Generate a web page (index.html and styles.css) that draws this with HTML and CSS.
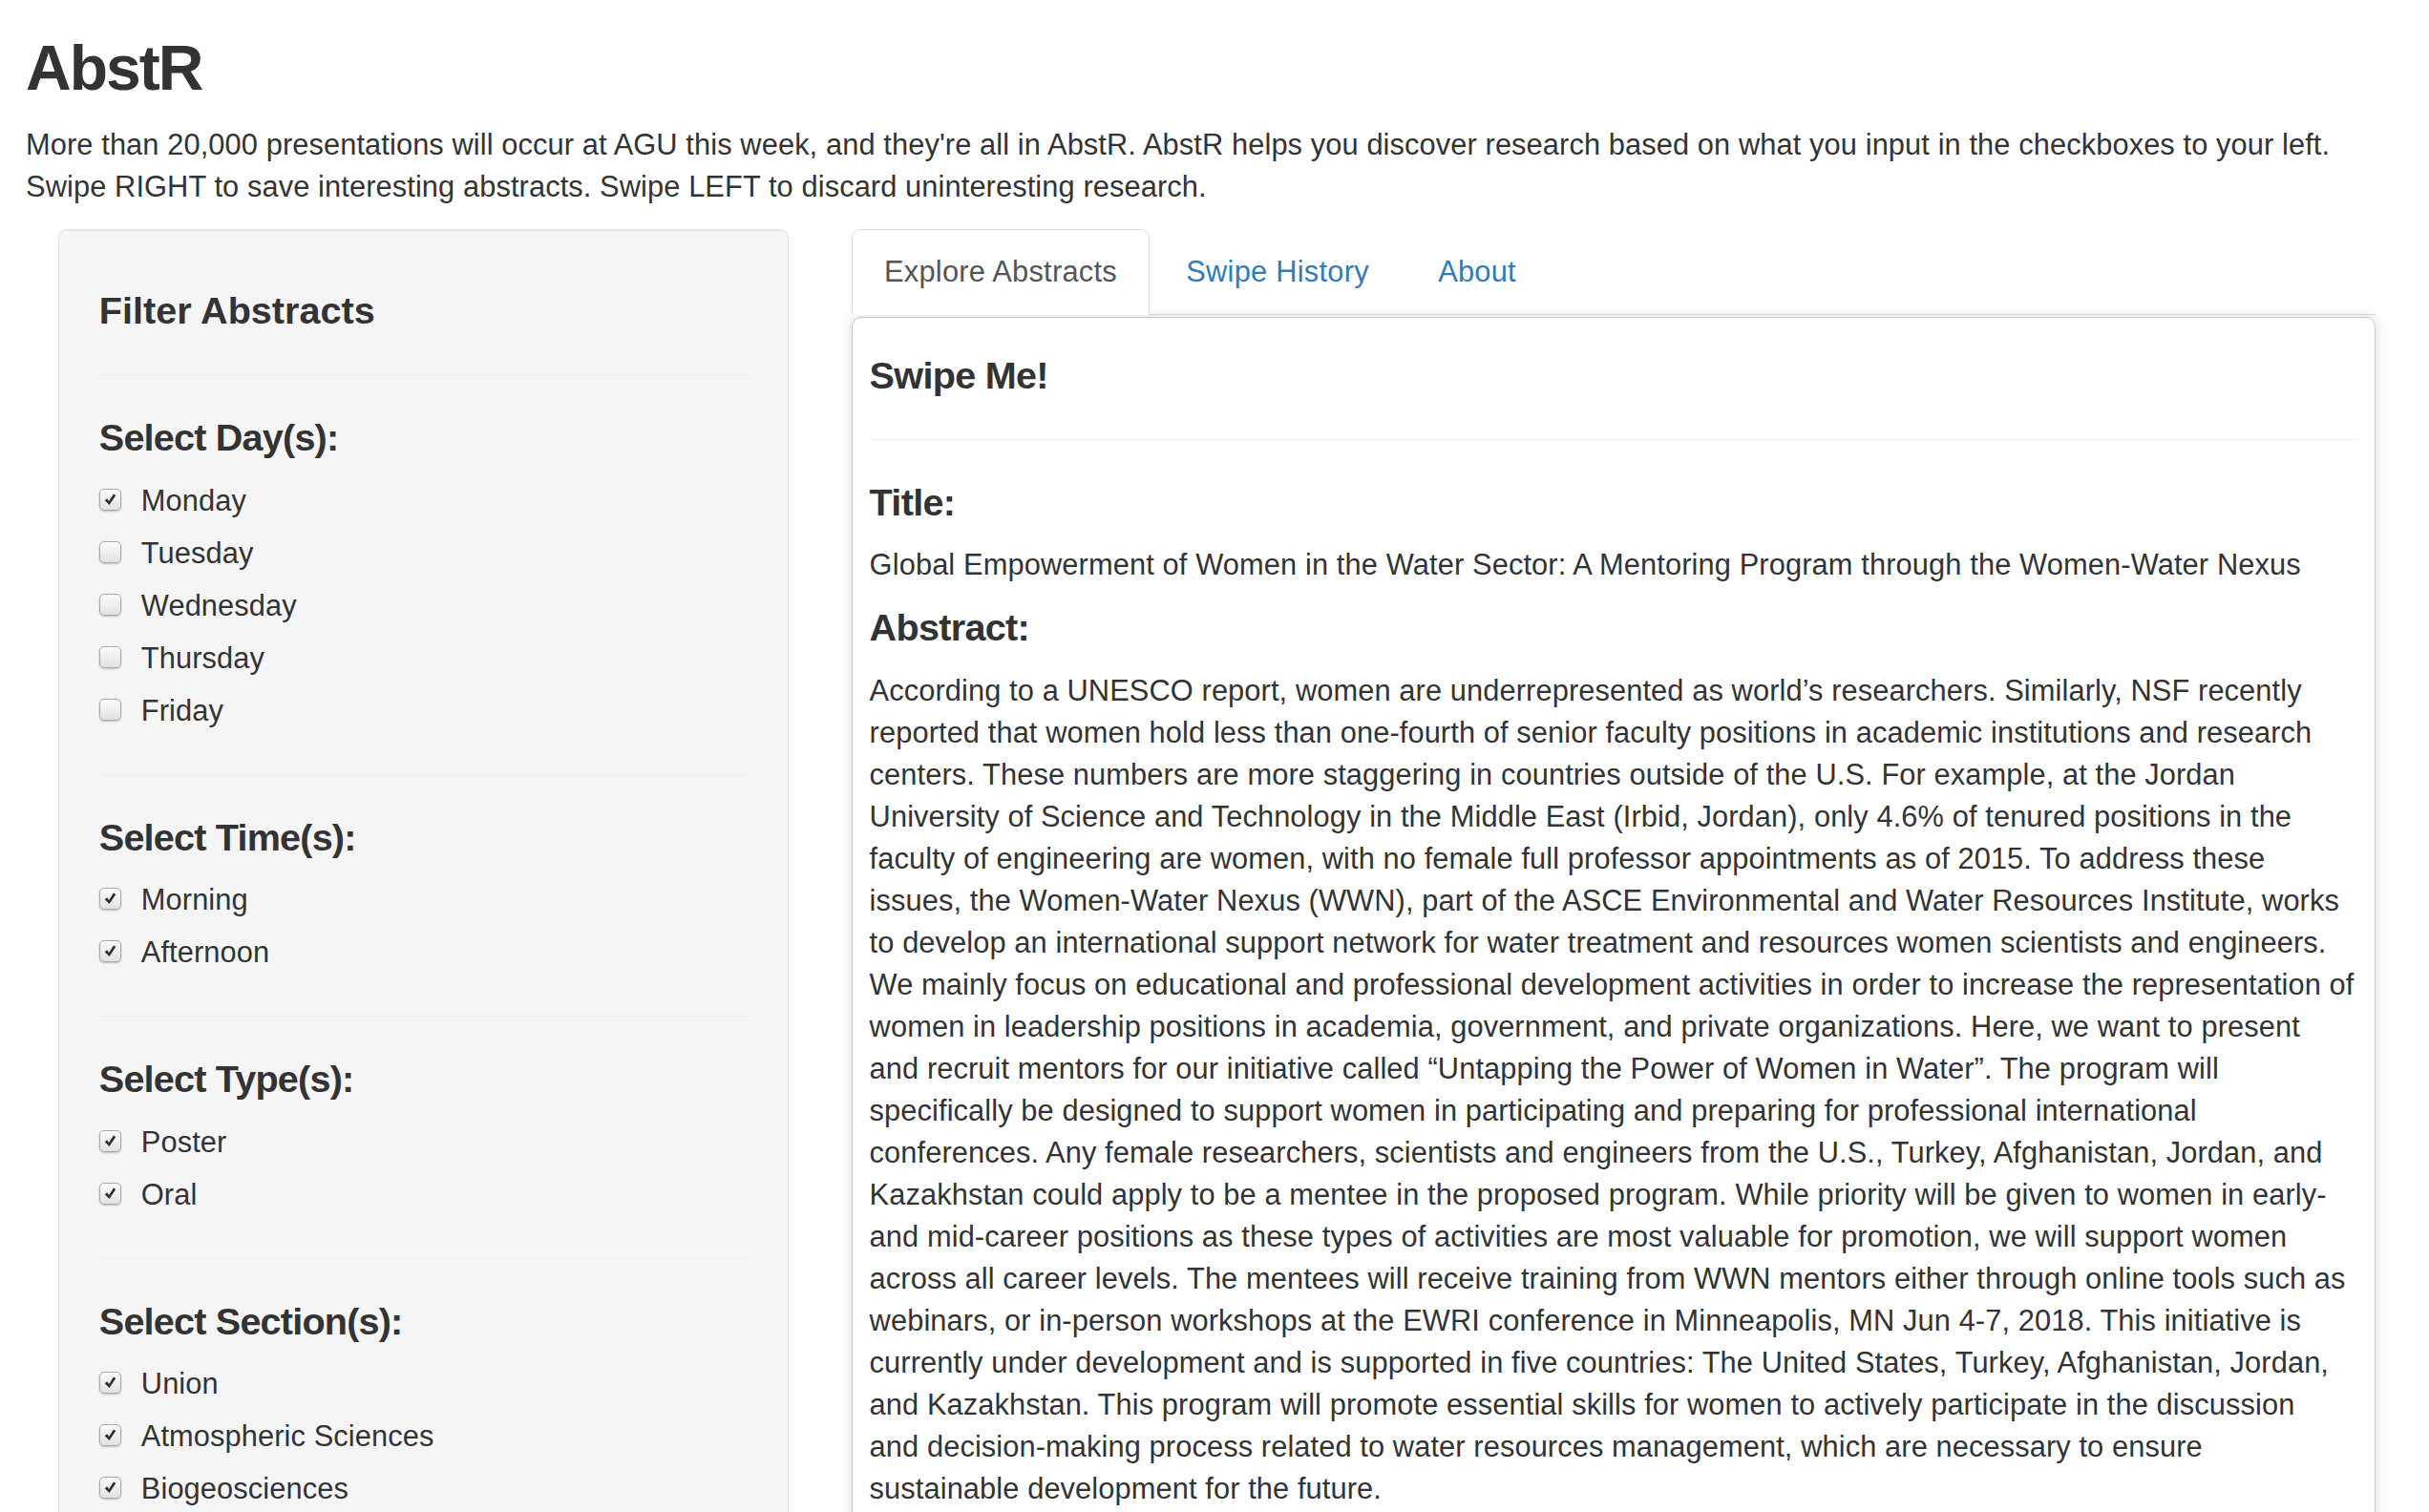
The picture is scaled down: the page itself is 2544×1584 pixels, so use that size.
FILE: index.html
```html
<!DOCTYPE html>
<html lang="en">
<head>
<meta charset="utf-8">
<title>AbstR</title>
<link rel="stylesheet" href="styles.css">
</head>
<body>
<div class="page">
  <h2 class="app-title">AbstR</h2>
  <p class="intro">More than 20,000 presentations will occur at AGU this week, and they're all in AbstR. AbstR helps you discover research based on what you input in the checkboxes to your left.<br>Swipe RIGHT to save interesting abstracts. Swipe LEFT to discard uninteresting research.</p>

  <div class="layout">
    <aside class="well">
      <h4 class="filter-title">Filter Abstracts</h4>
      <hr>
      <div class="group">
        <h4 class="group-title">Select Day(s):</h4>
        <div class="opts">
          <label class="check"><span class="box on"><svg viewBox="0 0 23 23"><path d="M5.2 12.2 L7.8 10.2 L10 13.2 L15.2 4.8 L17.8 6.6 L10.4 17.6 Z"/></svg></span>Monday</label>
          <label class="check"><span class="box"></span>Tuesday</label>
          <label class="check"><span class="box"></span>Wednesday</label>
          <label class="check"><span class="box"></span>Thursday</label>
          <label class="check"><span class="box"></span>Friday</label>
        </div>
      </div>
      <hr>
      <div class="group">
        <h4 class="group-title">Select Time(s):</h4>
        <div class="opts">
          <label class="check"><span class="box on"><svg viewBox="0 0 23 23"><path d="M5.2 12.2 L7.8 10.2 L10 13.2 L15.2 4.8 L17.8 6.6 L10.4 17.6 Z"/></svg></span>Morning</label>
          <label class="check"><span class="box on"><svg viewBox="0 0 23 23"><path d="M5.2 12.2 L7.8 10.2 L10 13.2 L15.2 4.8 L17.8 6.6 L10.4 17.6 Z"/></svg></span>Afternoon</label>
        </div>
      </div>
      <hr>
      <div class="group">
        <h4 class="group-title">Select Type(s):</h4>
        <div class="opts">
          <label class="check"><span class="box on"><svg viewBox="0 0 23 23"><path d="M5.2 12.2 L7.8 10.2 L10 13.2 L15.2 4.8 L17.8 6.6 L10.4 17.6 Z"/></svg></span>Poster</label>
          <label class="check"><span class="box on"><svg viewBox="0 0 23 23"><path d="M5.2 12.2 L7.8 10.2 L10 13.2 L15.2 4.8 L17.8 6.6 L10.4 17.6 Z"/></svg></span>Oral</label>
        </div>
      </div>
      <hr>
      <div class="group">
        <h4 class="group-title">Select Section(s):</h4>
        <div class="opts">
          <label class="check"><span class="box on"><svg viewBox="0 0 23 23"><path d="M5.2 12.2 L7.8 10.2 L10 13.2 L15.2 4.8 L17.8 6.6 L10.4 17.6 Z"/></svg></span>Union</label>
          <label class="check"><span class="box on"><svg viewBox="0 0 23 23"><path d="M5.2 12.2 L7.8 10.2 L10 13.2 L15.2 4.8 L17.8 6.6 L10.4 17.6 Z"/></svg></span>Atmospheric Sciences</label>
          <label class="check"><span class="box on"><svg viewBox="0 0 23 23"><path d="M5.2 12.2 L7.8 10.2 L10 13.2 L15.2 4.8 L17.8 6.6 L10.4 17.6 Z"/></svg></span>Biogeosciences</label>
        </div>
      </div>
    </aside>

    <main class="main">
      <ul class="tabs">
        <li class="active"><a href="#">Explore Abstracts</a></li>
        <li><a href="#">Swipe History</a></li>
        <li><a href="#">About</a></li>
      </ul>
      <section class="card">
        <h4 class="card-title">Swipe Me!</h4>
        <hr>
        <h4 class="card-title">Title:</h4>
        <p class="abs-title">Global Empowerment of Women in the Water Sector: A Mentoring Program through the Women-Water Nexus</p>
        <h4 class="card-title">Abstract:</h4>
        <p class="abs-text">According to a UNESCO report, women are underrepresented as world’s researchers. Similarly, NSF recently<br>reported that women hold less than one-fourth of senior faculty positions in academic institutions and research<br>centers. These numbers are more staggering in countries outside of the U.S. For example, at the Jordan<br>University of Science and Technology in the Middle East (Irbid, Jordan), only 4.6% of tenured positions in the<br>faculty of engineering are women, with no female full professor appointments as of 2015. To address these<br>issues, the Women-Water Nexus (WWN), part of the ASCE Environmental and Water Resources Institute, works<br>to develop an international support network for water treatment and resources women scientists and engineers.<br>We mainly focus on educational and professional development activities in order to increase the representation of<br>women in leadership positions in academia, government, and private organizations. Here, we want to present<br>and recruit mentors for our initiative called “Untapping the Power of Women in Water”. The program will<br>specifically be designed to support women in participating and preparing for professional international<br>conferences. Any female researchers, scientists and engineers from the U.S., Turkey, Afghanistan, Jordan, and<br>Kazakhstan could apply to be a mentee in the proposed program. While priority will be given to women in early-<br>and mid-career positions as these types of activities are most valuable for promotion, we will support women<br>across all career levels. The mentees will receive training from WWN mentors either through online tools such as<br>webinars, or in-person workshops at the EWRI conference in Minneapolis, MN Jun 4-7, 2018. This initiative is<br>currently under development and is supported in five countries: The United States, Turkey, Afghanistan, Jordan,<br>and Kazakhstan. This program will promote essential skills for women to actively participate in the discussion<br>and decision-making process related to water resources management, which are necessary to ensure<br>sustainable development for the future.</p>
      </section>
    </main>
  </div>
</div>
</body>
</html>
```

FILE: styles.css
```css
html, body {
  margin: 0;
  padding: 0;
  background: #fff;
}

body {
  height: 100vh;
  overflow: hidden;
  font-family: "Liberation Sans", Arial, Helvetica, sans-serif;
  font-size: 30.8px;
  line-height: 44px;
  color: #333;
}

.page {
  padding: 0 23px 0 27px;
}

.app-title {
  font-size: 66px;
  line-height: 72.6px;
  font-weight: 700;
  letter-spacing: -2px;
  margin: 35px 0 22px;
}

.intro {
  margin: 0 0 22px;
  letter-spacing: 0.1px;
}

.layout {
  display: grid;
  grid-template-columns: 765px 1596px;
  column-gap: 66px;
  margin-left: 34px;
  align-items: start;
}

hr {
  border: 0;
  border-top: 1px solid #eee;
  margin: 44px 0;
  height: 0;
}

h4 {
  font-size: 39.6px;
  line-height: 43.56px;
  margin: 22px 0;
  font-weight: 700;
}

/* Sidebar */
.well {
  background: #f5f5f5;
  border: 1px solid #e3e3e3;
  border-radius: 8.8px;
  padding: 41.8px;
  box-shadow: inset 0 1px 1px rgba(0, 0, 0, 0.05);
  min-height: 1600px;
}

.filter-title {
  letter-spacing: 0;
}

.group-title {
  letter-spacing: -0.8px;
}

.check {
  display: flex;
  align-items: flex-start;
  line-height: 44px;
  margin-bottom: 11px;
  white-space: nowrap;
  letter-spacing: 0.1px;
}

.box {
  flex: none;
  box-sizing: border-box;
  width: 23px;
  height: 23px;
  margin-top: 9px;
  margin-right: 21px;
  border: 1px solid #a9a9a9;
  border-radius: 5px;
  background: linear-gradient(#fbfbfb, #e2e2e2);
  box-shadow: 0 1px 2px rgba(0, 0, 0, 0.22);
}

.box svg {
  display: block;
  width: 21px;
  height: 21px;
}

.box svg path {
  fill: #2e2e2e;
}

/* Main panel */
.tabs {
  display: flex;
  list-style: none;
  margin: 0;
  padding: 0;
  border-bottom: 1px solid #ddd;
}

.tabs li {
  margin-bottom: -1px;
}

.tabs a {
  display: block;
  padding: 22px 33px;
  line-height: 44px;
  margin-right: 4.4px;
  border: 1px solid transparent;
  border-radius: 8.8px 8.8px 0 0;
  color: #337ab7;
  text-decoration: none;
  letter-spacing: 0.25px;
}

.tabs .active a {
  color: #555;
  background: #fff;
  border-color: #ddd #ddd transparent;
}

.card {
  margin-top: 2px;
  background: #fff;
  border: 1px solid #c8c8c8;
  border-radius: 10px;
  padding: 17.6px;
  box-shadow: 0 0 14px rgba(0, 0, 0, 0.15);
  min-height: 1400px;
}

.card-title {
  letter-spacing: -0.7px;
}

.card p {
  margin: 0 0 22px;
}

.abs-title {
  letter-spacing: 0.12px;
}

.abs-text {
  white-space: nowrap;
  letter-spacing: 0.1px;
}
```
